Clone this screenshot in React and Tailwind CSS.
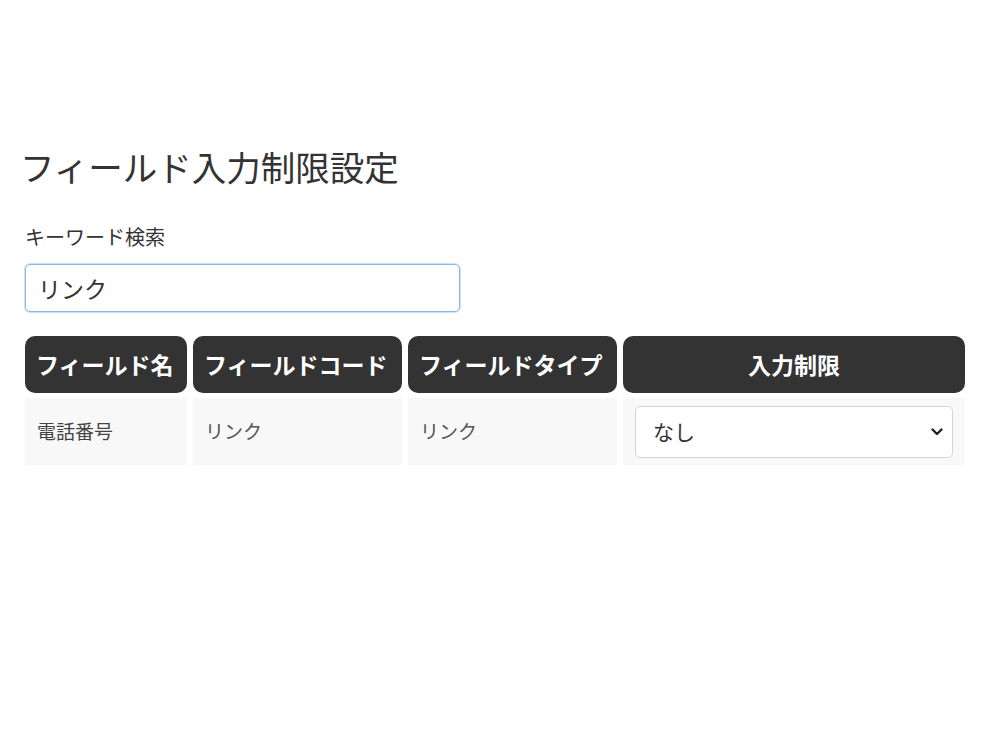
import { useState } from 'react';

const font = { fontFamily: '"Noto Sans CJK JP", "Noto Sans", sans-serif' };

const headers = ['フィールド名', 'フィールドコード', 'フィールドタイプ', '入力制限'];

export default function App() {
  const [keyword, setKeyword] = useState('リンク');
  const [limit, setLimit] = useState('なし');

  return (
    <div className="w-[1000px] h-[750px] bg-white text-[#333]" style={font}>
      <div className="pt-[142px] pl-[22px]">
        <h1 className="-ml-[2px] text-[34.5px] leading-[48px] font-normal">フィールド入力制限設定</h1>

        <div className="pl-[3px] mt-[34px]">
          <label className="block text-[20px] leading-[26px] text-[#333]">キーワード検索</label>
          <input
            value={keyword}
            onChange={e => setKeyword(e.target.value)}
            className="mt-[14px] w-[435px] h-[48px] px-[12px] text-[23px] text-[#333] rounded-[5px] border border-[#86b7e8] shadow-[0_0_0_1px_#cfe3f8] outline-none"
          />
        </div>

        {/* table */}
        <div className="ml-[3px] mt-[24px] grid grid-cols-[162px_209px_209px_342px] gap-x-[6px] gap-y-[5px]">
          {headers.map((h, i) => (
            <div
              key={h}
              className={`h-[57px] rounded-[10px] bg-[#333] text-white font-bold text-[23px] flex items-center ${i === 3 ? 'justify-center' : 'px-[11px]'}`}
            >
              {h}
            </div>
          ))}

          <div className="h-[67px] bg-[#f8f8f8] flex items-center px-[12px] text-[19px] text-[#444]">電話番号</div>
          <div className="h-[67px] bg-[#f8f8f8] flex items-center px-[12px] text-[19px] text-[#555]">リンク</div>
          <div className="h-[67px] bg-[#f8f8f8] flex items-center px-[12px] text-[19px] text-[#555]">リンク</div>
          <div className="h-[67px] bg-[#f8f8f8] flex items-center px-[12px]">
            <div className="relative w-full h-[52px]">
              <select
                value={limit}
                onChange={e => setLimit(e.target.value)}
                className="appearance-none w-full h-full rounded-[5px] border border-[#d4d4d4] bg-white pl-[17px] text-[21px] text-[#333] outline-none"
              >
                <option>なし</option>
                <option>半角数字のみ</option>
                <option>半角英数字のみ</option>
              </select>
              <svg className="absolute right-[10px] top-1/2 -translate-y-1/2 pointer-events-none" width="12" height="8" viewBox="0 0 12 8">
                <path d="M1.5 1.5 L6 6 L10.5 1.5" fill="none" stroke="#222" strokeWidth="2.4" strokeLinecap="round" strokeLinejoin="round" />
              </svg>
            </div>
          </div>
        </div>
      </div>
    </div>
  );
}
